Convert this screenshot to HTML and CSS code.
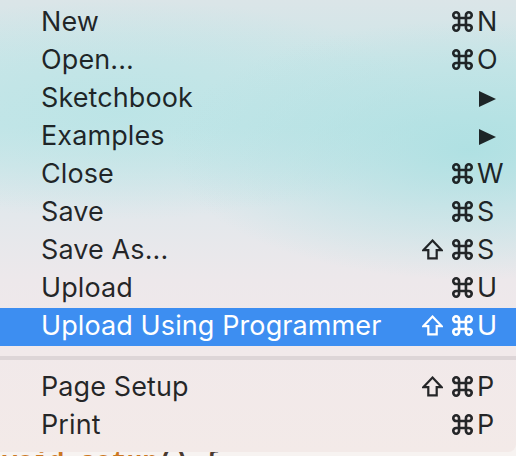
FILE: index.html
```html
<!DOCTYPE html>
<html lang="en">
<head>
    <meta charset="UTF-8">
    <title>File Menu</title>
    <link rel="stylesheet" href="styles.css">
</head>
<body>

<div class="menu">
    <div class="item"><span class="label">New</span><span class="keys"><span class="mods"><svg class="cmd" viewBox="0 0 20 20"><path d="M7 7h6v6H7z M7 7V4.5A2.5 2.5 0 1 0 4.5 7H7 M13 7V4.5A2.5 2.5 0 1 1 15.5 7H13 M7 13v2.5A2.5 2.5 0 1 1 4.5 13H7 M13 13v2.5A2.5 2.5 0 1 0 15.5 13H13"/></svg></span><span class="key">N</span></span></div>
    <div class="item"><span class="label">Open...</span><span class="keys"><span class="mods"><svg class="cmd" viewBox="0 0 20 20"><path d="M7 7h6v6H7z M7 7V4.5A2.5 2.5 0 1 0 4.5 7H7 M13 7V4.5A2.5 2.5 0 1 1 15.5 7H13 M7 13v2.5A2.5 2.5 0 1 1 4.5 13H7 M13 13v2.5A2.5 2.5 0 1 0 15.5 13H13"/></svg></span><span class="key">O</span></span></div>
    <div class="item"><span class="label">Sketchbook</span><svg class="arrow" viewBox="0 0 17 16"><polygon points="0,0 17,8 0,16"/></svg></div>
    <div class="item"><span class="label">Examples</span><svg class="arrow" viewBox="0 0 17 16"><polygon points="0,0 17,8 0,16"/></svg></div>
    <div class="item"><span class="label">Close</span><span class="keys"><span class="mods"><svg class="cmd" viewBox="0 0 20 20"><path d="M7 7h6v6H7z M7 7V4.5A2.5 2.5 0 1 0 4.5 7H7 M13 7V4.5A2.5 2.5 0 1 1 15.5 7H13 M7 13v2.5A2.5 2.5 0 1 1 4.5 13H7 M13 13v2.5A2.5 2.5 0 1 0 15.5 13H13"/></svg></span><span class="key">W</span></span></div>
    <div class="item"><span class="label">Save</span><span class="keys"><span class="mods"><svg class="cmd" viewBox="0 0 20 20"><path d="M7 7h6v6H7z M7 7V4.5A2.5 2.5 0 1 0 4.5 7H7 M13 7V4.5A2.5 2.5 0 1 1 15.5 7H13 M7 13v2.5A2.5 2.5 0 1 1 4.5 13H7 M13 13v2.5A2.5 2.5 0 1 0 15.5 13H13"/></svg></span><span class="key">S</span></span></div>
    <div class="item"><span class="label">Save As...</span><span class="keys"><span class="mods"><svg class="shift" viewBox="0 0 20 20"><polygon points="10,1.5 18.5,10.5 14,10.5 14,18.5 6,18.5 6,10.5 1.5,10.5"/></svg><svg class="cmd" viewBox="0 0 20 20"><path d="M7 7h6v6H7z M7 7V4.5A2.5 2.5 0 1 0 4.5 7H7 M13 7V4.5A2.5 2.5 0 1 1 15.5 7H13 M7 13v2.5A2.5 2.5 0 1 1 4.5 13H7 M13 13v2.5A2.5 2.5 0 1 0 15.5 13H13"/></svg></span><span class="key">S</span></span></div>
    <div class="item"><span class="label">Upload</span><span class="keys"><span class="mods"><svg class="cmd" viewBox="0 0 20 20"><path d="M7 7h6v6H7z M7 7V4.5A2.5 2.5 0 1 0 4.5 7H7 M13 7V4.5A2.5 2.5 0 1 1 15.5 7H13 M7 13v2.5A2.5 2.5 0 1 1 4.5 13H7 M13 13v2.5A2.5 2.5 0 1 0 15.5 13H13"/></svg></span><span class="key">U</span></span></div>
    <div class="item selected"><span class="label">Upload Using Programmer</span><span class="keys"><span class="mods"><svg class="shift" viewBox="0 0 20 20"><polygon points="10,1.5 18.5,10.5 14,10.5 14,18.5 6,18.5 6,10.5 1.5,10.5"/></svg><svg class="cmd" viewBox="0 0 20 20"><path d="M7 7h6v6H7z M7 7V4.5A2.5 2.5 0 1 0 4.5 7H7 M13 7V4.5A2.5 2.5 0 1 1 15.5 7H13 M7 13v2.5A2.5 2.5 0 1 1 4.5 13H7 M13 13v2.5A2.5 2.5 0 1 0 15.5 13H13"/></svg></span><span class="key">U</span></span></div>

    <div class="separator"></div>

    <div class="item"><span class="label">Page Setup</span><span class="keys"><span class="mods"><svg class="shift" viewBox="0 0 20 20"><polygon points="10,1.5 18.5,10.5 14,10.5 14,18.5 6,18.5 6,10.5 1.5,10.5"/></svg><svg class="cmd" viewBox="0 0 20 20"><path d="M7 7h6v6H7z M7 7V4.5A2.5 2.5 0 1 0 4.5 7H7 M13 7V4.5A2.5 2.5 0 1 1 15.5 7H13 M7 13v2.5A2.5 2.5 0 1 1 4.5 13H7 M13 13v2.5A2.5 2.5 0 1 0 15.5 13H13"/></svg></span><span class="key">P</span></span></div>
    <div class="item"><span class="label">Print</span><span class="keys"><span class="mods"><svg class="cmd" viewBox="0 0 20 20"><path d="M7 7h6v6H7z M7 7V4.5A2.5 2.5 0 1 0 4.5 7H7 M13 7V4.5A2.5 2.5 0 1 1 15.5 7H13 M7 13v2.5A2.5 2.5 0 1 1 4.5 13H7 M13 13v2.5A2.5 2.5 0 1 0 15.5 13H13"/></svg></span><span class="key">P</span></span></div>
</div>

<!-- editor text peeking out under the menu -->
<div class="below">
    <span class="code"><span class="kw">void setup</span>() {</span>
</div>

</body>
</html>
```

FILE: styles.css
```css
/* Global Styles */
body {
    margin: 0;
    width: 516px;
    height: 456px;
    overflow: hidden;
    background-color: #f7f3f1;
    font-family: 'Inter', 'Liberation Sans', sans-serif;
}

/* Menu panel */
.menu {
    height: 452px;
    box-sizing: border-box;
    padding: 4px 0 7px;
    border-bottom-right-radius: 8px;
    background:
        radial-gradient(ellipse 300px 130px at 470px 150px, rgba(172, 224, 226, 0.9), rgba(172, 224, 226, 0)),
        radial-gradient(ellipse 320px 110px at 120px 110px, rgba(186, 228, 230, 0.85), rgba(186, 228, 230, 0)),
        linear-gradient(180deg, #dbe5e8 0%, #cde6e8 14%, #c8e6e8 28%, #e2e8ec 46%, #ede8eb 62%, #f1e9ea 78%, #f3eae8 100%);
    color: rgba(8, 10, 12, 0.88);
}

.item {
    height: 38px;
    display: flex;
    align-items: center;
    justify-content: space-between;
    padding: 0 17px 0 41px;
    font-size: 27px;
    letter-spacing: 0.1px;
}

.label {
    margin-top: -3px;
}

.selected {
    background-color: #3d8ef1;
    color: #ffffff;
}

.keys {
    display: flex;
    align-items: center;
    margin-top: -3px;
}

.mods {
    display: flex;
    align-items: center;
    gap: 8px;
}

.key {
    width: 22px;
    margin-left: 3px;
}

.cmd {
    width: 23px;
    height: 23px;
    fill: none;
    stroke: currentColor;
    stroke-width: 2.3;
}

.shift {
    width: 21px;
    height: 21px;
    fill: none;
    stroke: currentColor;
    stroke-width: 2.1;
}

.arrow {
    width: 17px;
    height: 16px;
    margin-right: 3px;
    fill: currentColor;
}

.separator {
    height: 4px;
    margin: 10px 0 9px;
    background-color: #ddd5d7;
}

/* Editor underneath */
.below {
    height: 4px;
    overflow: hidden;
    padding-left: 2px;
}

.code {
    display: block;
    margin-top: -5px;
    font-family: 'Liberation Mono', monospace;
    font-size: 26px;
    font-weight: bold;
    color: #4b3a30;
}

.kw {
    color: #cc7722;
}
```
